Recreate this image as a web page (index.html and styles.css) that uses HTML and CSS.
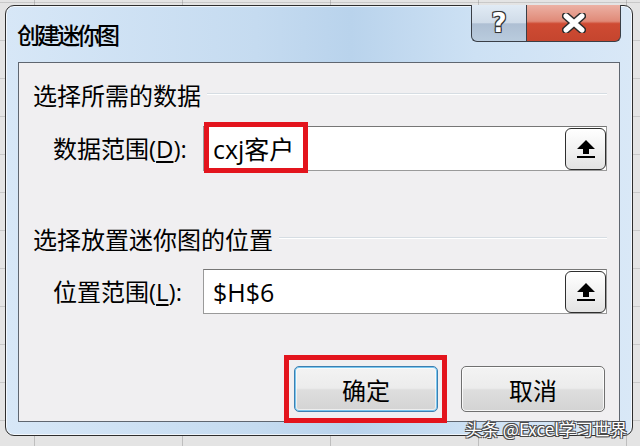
FILE: index.html
```html
<!DOCTYPE html>
<html lang="zh-CN">
<head>
    <meta charset="UTF-8">
    <meta name="viewport" content="width=device-width, initial-scale=1.0">
    <title>创建迷你图</title>
    <link rel="stylesheet" href="styles.css">
</head>
<body>
    <div class="window">
        <div class="titlebar">
            <div class="title">创建迷你图</div>
            <div class="caption-buttons">
                <div class="cap-btn help">?</div>
                <div class="cap-btn close">
                    <svg width="24" height="20" viewBox="0 0 24 20">
                        <path d="M4 3 L20 17 M20 3 L4 17" stroke="#2b2b2b" stroke-width="8" stroke-linecap="round"/>
                        <path d="M4 3 L20 17 M20 3 L4 17" stroke="#ffffff" stroke-width="5" stroke-linecap="round"/>
                    </svg>
                </div>
            </div>
        </div>

        <div class="client">
            <div class="group-title">
                <span>选择所需的数据</span>
                <i class="rule"></i>
            </div>
            <div class="field-row">
                <label class="field-label">数据范围(<u>D</u>):</label>
                <div class="ref-input">
                    <span class="ref-text">cxj客户</span>
                    <span class="mark-box"></span>
                    <button class="collapse-btn">
                        <svg width="20" height="20" viewBox="0 0 20 20">
                            <path d="M10 1 L1 10 H7 V15 H13 V10 H19 Z" fill="#000"/>
                            <rect x="1" y="17" width="18" height="2" fill="#000"/>
                        </svg>
                    </button>
                </div>
            </div>

            <div class="group-title second">
                <span>选择放置迷你图的位置</span>
                <i class="rule"></i>
            </div>
            <div class="field-row second">
                <label class="field-label">位置范围(<u>L</u>):</label>
                <div class="ref-input">
                    <span class="ref-text">$H$6</span>
                    <button class="collapse-btn">
                        <svg width="20" height="20" viewBox="0 0 20 20">
                            <path d="M10 1 L1 10 H7 V15 H13 V10 H19 Z" fill="#000"/>
                            <rect x="1" y="17" width="18" height="2" fill="#000"/>
                        </svg>
                    </button>
                </div>
            </div>

            <div class="actions">
                <div class="marked">
                    <button class="btn default">确定</button>
                </div>
                <button class="btn">取消</button>
            </div>
        </div>

        <div class="watermark">头条 @Excel学习世界</div>
    </div>
</body>
</html>
```

FILE: styles.css
```css
body {
    margin: 0;
    width: 640px;
    height: 446px;
    overflow: hidden;
    font-family: "Open Sans", "Noto Sans CJK SC", sans-serif;
    color: #000;
    background-color: #e4e4e4;
    background-image:
        linear-gradient(to right, rgba(120, 120, 120, 0.35) 1px, transparent 1px),
        linear-gradient(to bottom, rgba(150, 150, 150, 0.35) 1px, transparent 1px);
    background-size: 148px 100%, 100% 38px;
    background-position: 34px 0, 0 2px;
}

.window {
    position: relative;
    box-sizing: border-box;
    width: 628px;
    height: 431px;
    margin: 5px 0 0 5px;
    padding: 0 12px 13px 12px;
    border: 1px solid #2e2e2e;
    border-radius: 9px;
    background: linear-gradient(to right, #d7e7f7 0%, #c5dbf0 40%, #b9d3ec 55%, #cde1f4 75%, #d9e8f7 100%);
    box-shadow: inset 0 0 0 1px rgba(255, 255, 255, 0.7);
}

.titlebar {
    display: flex;
    justify-content: space-between;
    align-items: flex-start;
    height: 56px;
    margin-right: -1px;
}

.title {
    font-family: "Noto Sans CJK SC", sans-serif;
    font-size: 23px;
    font-weight: 500;
    letter-spacing: -3px;
    line-height: 28px;
    margin: 14px 0 0 -1px;
    color: #000;
}

.caption-buttons {
    display: flex;
    margin-top: -1px;
}

.cap-btn {
    box-sizing: border-box;
    height: 37px;
    display: flex;
    justify-content: center;
    align-items: center;
    border: 1px solid #3a3f47;
    border-top: none;
}

.help {
    width: 55px;
    border-right: none;
    border-bottom-left-radius: 6px;
    background: linear-gradient(to bottom, #e1ebf5 0%, #cfdbe8 50%, #aebfd3 52%, #b9cbdd 100%);
    font-family: "DejaVu Sans", sans-serif;
    font-weight: bold;
    font-size: 26px;
    color: #fff;
    text-shadow: -1px -1px 0 #333, 1px -1px 0 #333, -1px 1px 0 #333, 1px 1px 0 #333, 0 0 2px #333;
}

.close {
    width: 95px;
    border-bottom-right-radius: 6px;
    background: linear-gradient(to bottom, #ecb1a4 0%, #e08a78 45%, #cf4b33 52%, #c5452e 100%);
}

.client {
    box-sizing: border-box;
    height: 360px;
    padding: 0 12px 0 14px;
    border: 1px solid #5f6670;
    background: #f0eff1;
    font-size: 24px;
}

.group-title {
    display: flex;
    align-items: center;
    height: 28px;
    margin-top: 17px;
    font-family: "Noto Sans CJK SC", sans-serif;
}

.group-title.second {
    margin-top: 53px;
}

.rule {
    flex: 1;
    margin-left: 6px;
    border-top: 1px solid #d6dde3;
    border-bottom: 1px solid #ffffff;
}

.field-row {
    display: flex;
    align-items: center;
    margin-top: 18px;
    padding-left: 20px;
}

.field-row.second {
    margin-top: 17px;
}

.field-label {
    width: 150px;
    line-height: 30px;
}

.field-label u {
    text-underline-offset: 3px;
}

.ref-input {
    position: relative;
    flex: 1;
    box-sizing: border-box;
    height: 45px;
    display: flex;
    justify-content: space-between;
    align-items: center;
    padding-left: 9px;
    background: #fff;
    border: 1px solid #9a9a9a;
    border-top-color: #767676;
}

.ref-text {
    font-size: 25px;
    line-height: 30px;
}

.mark-box {
    position: absolute;
    left: 0;
    top: -5px;
    width: 104px;
    height: 51px;
    box-sizing: border-box;
    border: 5px solid #e3141d;
}

.collapse-btn {
    width: 41px;
    height: 42px;
    padding: 0;
    display: flex;
    justify-content: center;
    align-items: center;
    border: 1px solid #2e2e2e;
    border-radius: 6px;
    background: linear-gradient(to bottom, #ffffff 0%, #f2f2f2 50%, #e3e3e3 100%);
}

.actions {
    display: flex;
    justify-content: flex-end;
    gap: 23px;
    margin-top: 52px;
    margin-right: 2px;
}

.marked {
    position: relative;
}

.marked::after {
    content: "";
    position: absolute;
    left: -10px;
    right: -9px;
    top: -11px;
    bottom: -11px;
    border: 5px solid #e3141d;
}

.btn {
    width: 144px;
    height: 46px;
    font-family: "Noto Sans CJK SC", sans-serif;
    font-size: 24px;
    color: #000;
    border: 1px solid #707070;
    border-radius: 5px;
    background: linear-gradient(to bottom, #f3f3f3 0%, #ececec 48%, #dedede 52%, #d3d3d3 100%);
    box-shadow: inset 0 0 0 1px rgba(255, 255, 255, 0.8);
}

.btn.default {
    border-color: #3c7fb1;
    box-shadow: inset 0 0 0 1px #79c6ee, inset 0 0 0 2px rgba(255, 255, 255, 0.6);
}

.watermark {
    position: absolute;
    left: 459px;
    top: 410px;
    font-family: "Noto Sans CJK SC", sans-serif;
    font-size: 17px;
    color: #fff;
    white-space: nowrap;
    text-shadow: -1px -1px 0 #4a4a4a, 1px -1px 0 #4a4a4a, -1px 1px 0 #4a4a4a, 1px 1px 0 #4a4a4a;
}
```
